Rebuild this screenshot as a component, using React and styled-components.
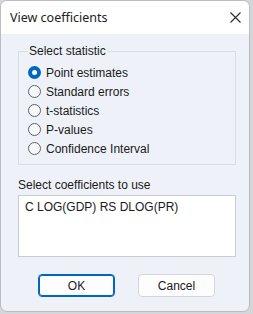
import styled, { createGlobalStyle } from 'styled-components';

const GlobalStyle = createGlobalStyle`
    html, body {
        margin: 0;
        padding: 0;
        background: #d4d6d9;
    }
`;

const Window = styled.div`
    width: 248px;
    height: 310px;
    border: 1px solid #b9bcc0;
    border-radius: 7px;
    overflow: hidden;
    display: flex;
    flex-direction: column;
    background: #eef2f8;
    font-family: "Liberation Sans", Arial, sans-serif;
    font-size: 12px;
    color: #1a1a1a;
`;

const TitleBar = styled.div`
    height: 33px;
    flex: none;
    display: flex;
    align-items: center;
    justify-content: space-between;
    padding: 0 8px 0 9px;
    background: #ffffff;
    font-family: "Noto Sans", "Open Sans", sans-serif;
    font-size: 12.5px;
    color: #222;
`;

const CloseIcon = () => (
    <svg width="11" height="11" viewBox="0 0 11 11">
        <path d="M0.5 0.5 L10.5 10.5 M10.5 0.5 L0.5 10.5" stroke="#2b2b2b" strokeWidth="1.1" />
    </svg>
);

const Body = styled.div`
    flex: 1;
    padding: 10px 13px 0 17px;
    display: flex;
    flex-direction: column;
`;

const GroupBox = styled.fieldset`
    margin: 0;
    padding: 5px 0 0 9px;
    border: 1px solid #d9dde3;
    height: 121px;
    box-sizing: border-box;
    display: flex;
    flex-direction: column;
`;

const Legend = styled.legend`
    padding: 0 1px;
    color: #1a1a1a;
    line-height: 14px;
`;

const RadioRow = styled.label`
    display: flex;
    align-items: center;
    gap: 5px;
    height: 19px;
`;

const RadioDot = styled.span`
    width: 13px;
    height: 13px;
    box-sizing: border-box;
    border-radius: 50%;
    flex: none;
    border: ${ p => p.$checked ? '4px solid #0067c0' : '1px solid #5f6368' };
    background: ${ p => p.$checked ? '#ffffff' : '#f6f7f9' };
`;

const FieldLabel = styled.div`
    margin-top: 13px;
    line-height: 14px;
`;

const ListBox = styled.div`
    margin-top: 3px;
    height: 62px;
    box-sizing: border-box;
    background: #ffffff;
    border: 1px solid #c9ccd1;
    padding: 4px 6px;
    line-height: 14px;
`;

const ButtonRow = styled.div`
    display: flex;
    gap: 23px;
    margin-top: 17px;
    padding-left: 20px;
`;

const Button = styled.button`
    width: 77px;
    height: 23px;
    box-sizing: border-box;
    border-radius: 4px;
    background: #fdfdfd;
    border: 1px solid ${ p => p.$primary ? '#0067c0' : '#d3d6da' };
    box-shadow: ${ p => p.$primary ? 'inset 0 0 0 1px #0067c0' : 'none' };
    font-family: "Liberation Sans", Arial, sans-serif;
    font-size: 12px;
    color: #1a1a1a;
    padding: 0;
`;

const options = [
    'Point estimates',
    'Standard errors',
    't-statistics',
    'P-values',
    'Confidence Interval',
];

export default function App() {
    return (
        <>
            <GlobalStyle />
            <Window>
                <TitleBar>
                    <span>View coefficients</span>
                    <CloseIcon />
                </TitleBar>
                <Body>
                    <GroupBox>
                        <Legend>Select statistic</Legend>
                        { options.map((o, i) => (
                            <RadioRow key={ o }>
                                <RadioDot $checked={ i === 0 } />
                                { o }
                            </RadioRow>
                        )) }
                    </GroupBox>
                    <FieldLabel>Select coefficients to use</FieldLabel>
                    <ListBox>C LOG(GDP) RS DLOG(PR)</ListBox>
                    <ButtonRow>
                        <Button $primary>OK</Button>
                        <Button>Cancel</Button>
                    </ButtonRow>
                </Body>
            </Window>
        </>
    );
}
